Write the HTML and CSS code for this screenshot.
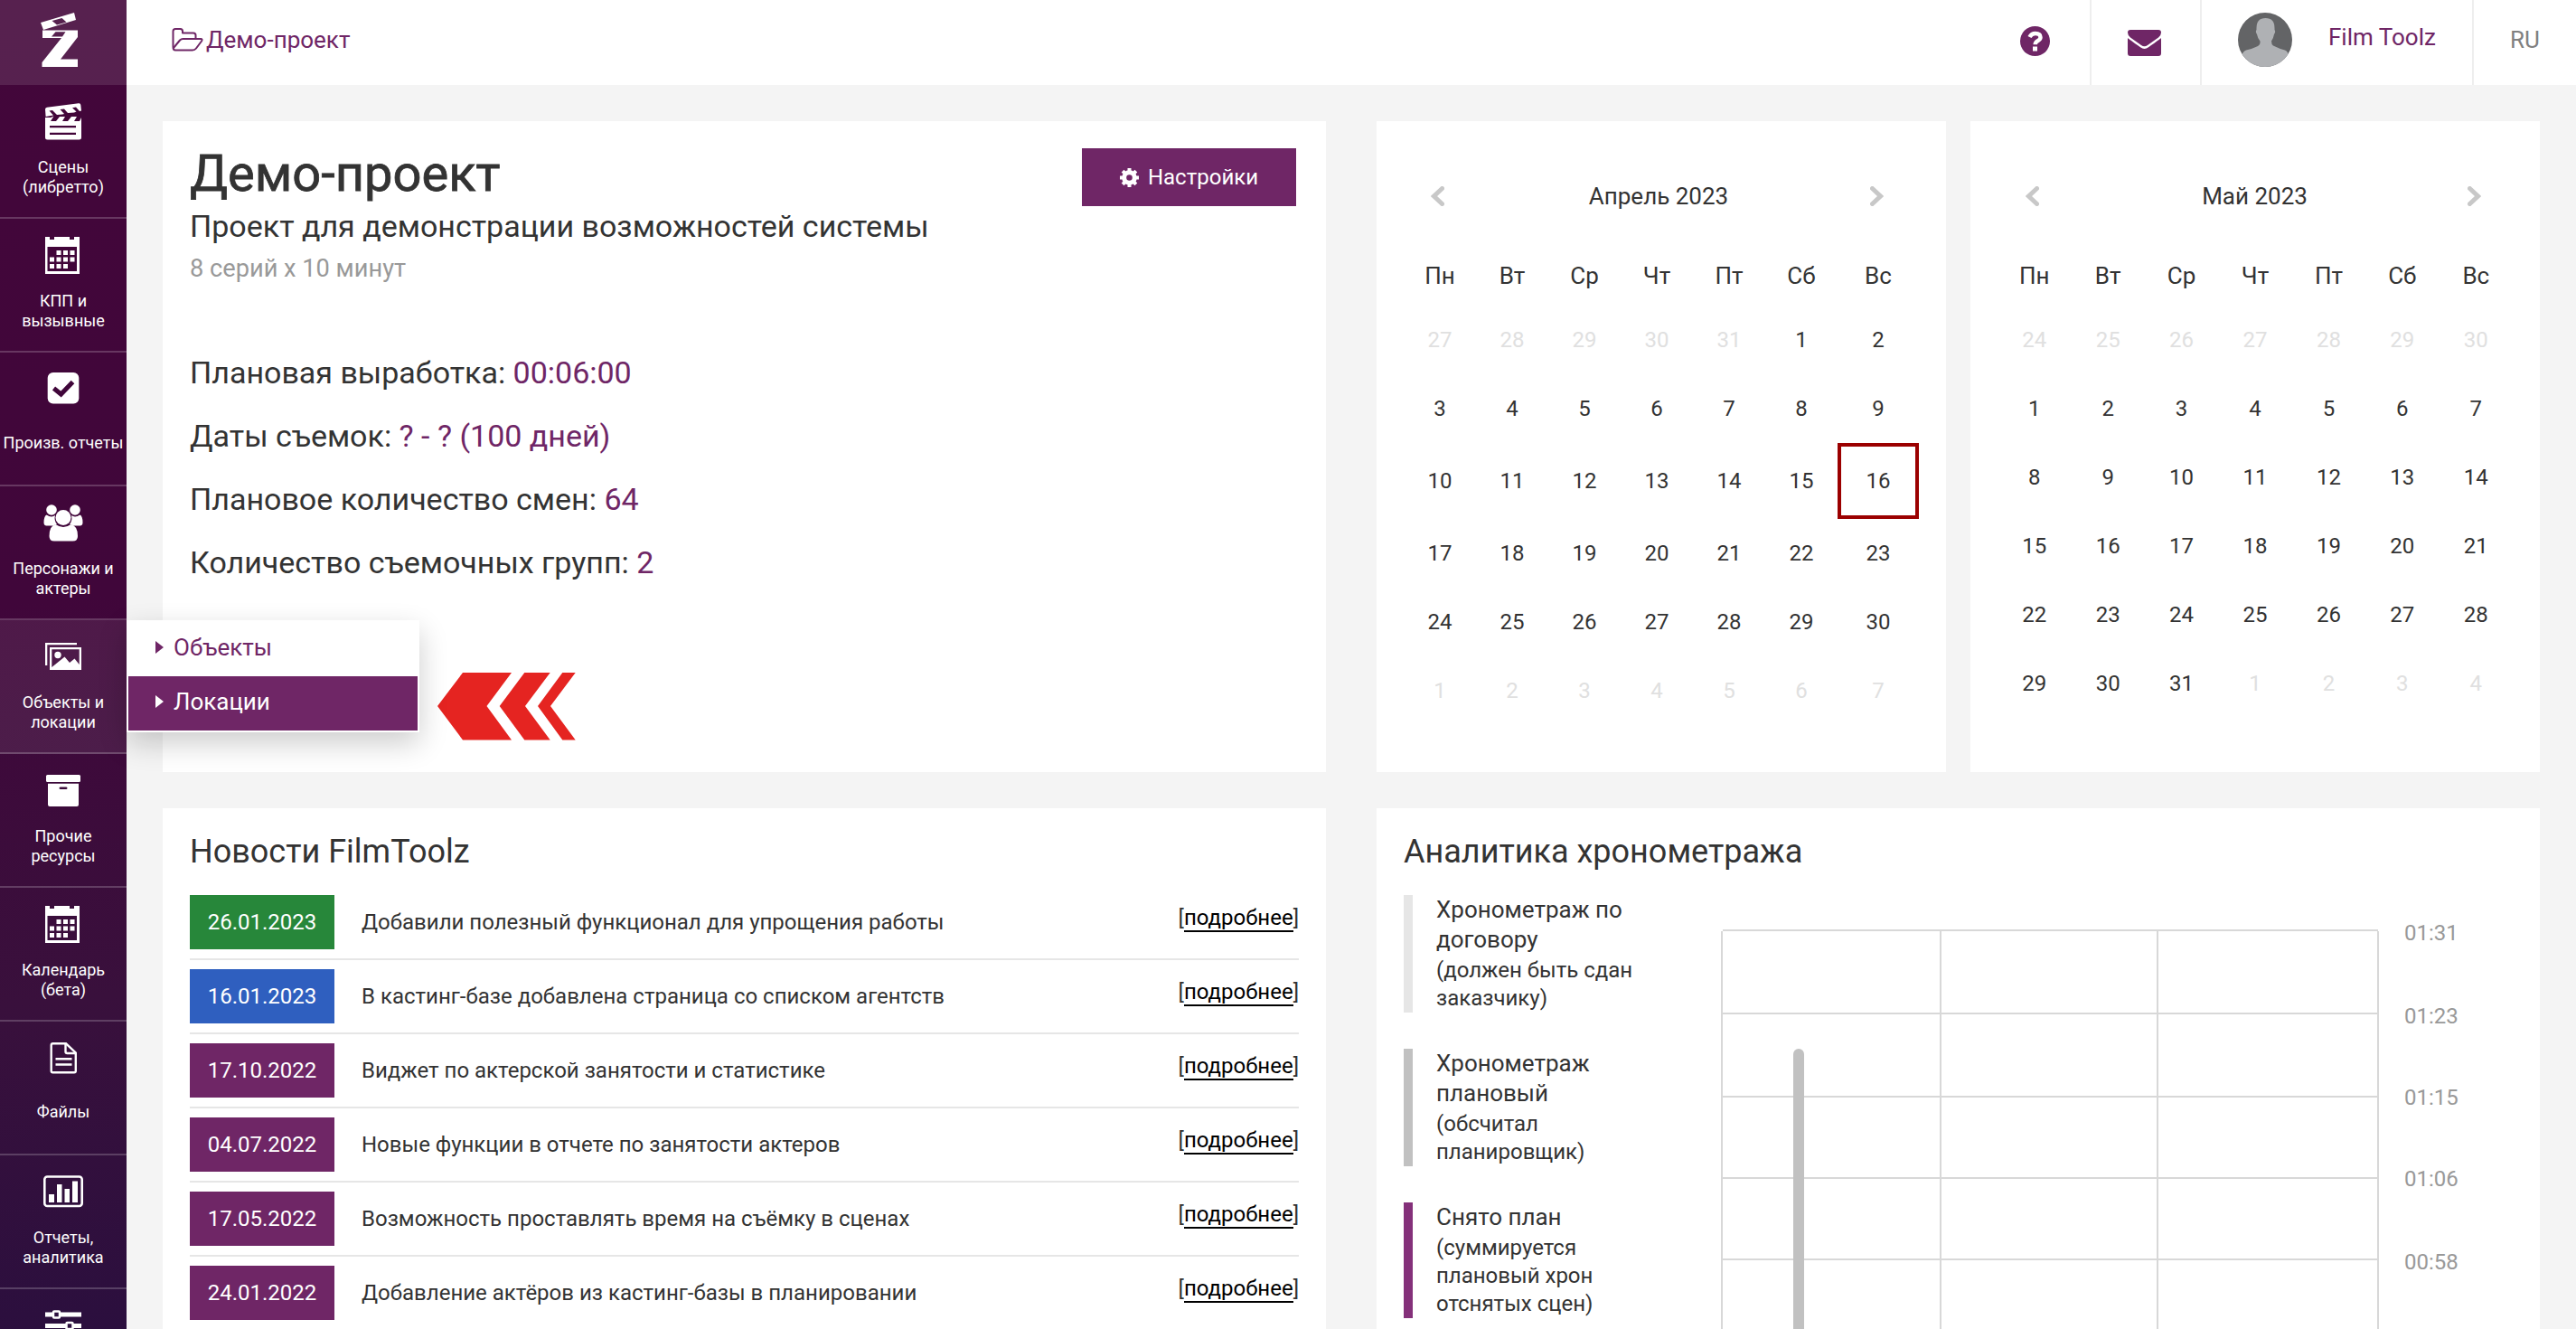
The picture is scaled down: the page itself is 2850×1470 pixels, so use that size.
FILE: index.html
```html
<!DOCTYPE html>
<html lang="ru">
<head>
  <meta charset="UTF-8">
  <meta name="viewport" content="width=device-width, initial-scale=1.0">
  <title>Демо-проект</title>
  <link rel="stylesheet" href="styles.css">
</head>
<body>

<!-- Боковое меню -->
<aside class="sidebar">
  <a href="#" class="logo">
    <svg width="41" height="60" viewBox="0 0 41 60" fill="#fff">
      <path fill-rule="evenodd" d="M0 11 37 0 39 8 3 19ZM12.500 9 18 13.500 28.500 10.500 23.500 6Z"/>
      <path fill-rule="evenodd" d="M2 19.500H41V27L22 51.500H41V60H1.500V55L23 28H2ZM16.500 21.200 12 26.500H24L27.500 21.200Z"/>
    </svg>
  </a>
  <nav>
    <a href="#" class="item">
      <svg class="icon" viewBox="0 0 44 41" fill="#fff">
        <path d="M2 7Q2 5 4 4.700L39 .300Q41 0 41.300 2L42 8.500 40 9 36 4.500 32 5.200 36.500 9.500 34 10.500 27 11 23 6.500 18.500 7 23 12 21 12.500 15 13 10 8 6.500 8.600 11 13.500 2.600 15Z"/>
        <path fill-rule="evenodd" d="M2 16H8L11.500 14.500 8 20H14L18 15H24L21 20H27L31 15H37L34 20H40L42 16V38Q42 40.500 39.500 40.500H4.500Q2 40.500 2 38ZM7 25V27.300H36V25ZM7 32.700V35H36V32.700Z"/>
      </svg>
      <span class="label">Сцены<br>(либретто)</span>
    </a>
    <a href="#" class="item">
      <svg class="icon" viewBox="0 0 44 41" fill="#fff">
        <path fill-rule="evenodd" d="M2 0H7V3H12V0H29V3H34V0H40V41H2ZM4.500 11V38H37V11Z"/>
        <path d="M14.500 15h5v5h-5zM22 15h5v5h-5zM29.500 15h5v5h-5zM7 22.500h5v5H7zM14.500 22.500h5v5h-5zM22 22.500h5v5h-5zM29.500 22.500h5v5h-5zM7 30h5v5H7zM14.500 30h5v5h-5zM22 30h5v5h-5z"/>
      </svg>
      <span class="label">КПП и<br>вызывные</span>
    </a>
    <a href="#" class="item">
      <svg class="icon" viewBox="0 0 44 41">
        <rect x="4.700" y="2" width="34.600" height="34.600" rx="6" fill="#fff"/>
        <path d="M11.500 19.500 19.500 26 32.500 12.500" fill="none" stroke="#40063a" stroke-width="5"/>
      </svg>
      <span class="label label-single">Произв. отчеты</span>
    </a>
    <a href="#" class="item">
      <svg class="icon" viewBox="0 0 44 41" fill="#fff">
        <circle cx="9" cy="6" r="5.800"/>
        <circle cx="35" cy="6" r="5.800"/>
        <path d="M3.500 11.500Q9 15 13 12 11.500 18 15 21.500 12 23 11 23.500H3Q.500 23 .500 20 .500 13 3.500 11.500ZM40.500 11.500Q35 15 31 12 32.500 18 29 21.500 32 23 33 23.500H41Q43.500 23 43.500 20 43.500 13 40.500 11.500Z"/>
        <circle cx="22" cy="14.500" r="8.500"/>
        <path d="M13.500 22Q22 28 30.500 22 38 23.500 38 35 38 40.500 32.500 40.500H12Q6.500 40.500 6.500 35 6.500 23.500 13.500 22Z"/>
      </svg>
      <span class="label">Персонажи и<br>актеры</span>
    </a>
    <div class="item active">
      <svg class="icon" viewBox="0 0 44 41" fill="#fff">
        <path d="M2 5H37V7.300H4.300V30H2Z"/>
        <path fill-rule="evenodd" d="M7 10H42V35H7ZM9.300 12.300V32L23.500 20.500 29 27 34.500 22.500 39.700 29V12.300Z"/>
        <circle cx="16" cy="18.500" r="3.700"/>
      </svg>
      <span class="label">Объекты и<br>локации</span>
      <div class="submenu">
        <a href="#"><i></i>Объекты</a>
        <a href="#" class="current"><i></i>Локации</a>
      </div>
    </div>
    <a href="#" class="item">
      <svg class="icon" viewBox="0 0 44 41" fill="#fff">
        <rect x="3" y="3" width="38" height="8" rx="1.500"/>
        <path fill-rule="evenodd" d="M5 12.700H39V36Q39 38 37 38H7Q5 38 5 36ZM19 16.500Q17.500 16.500 17.500 17.800 17.500 19 19 19H25Q26.500 19 26.500 17.800 26.500 16.500 25 16.500Z"/>
      </svg>
      <span class="label">Прочие<br>ресурсы</span>
    </a>
    <a href="#" class="item">
      <svg class="icon" viewBox="0 0 44 41" fill="#fff">
        <path fill-rule="evenodd" d="M2 0H7V3H12V0H29V3H34V0H40V41H2ZM4.500 11V38H37V11Z"/>
        <path d="M14.500 15h5v5h-5zM22 15h5v5h-5zM29.500 15h5v5h-5zM7 22.500h5v5H7zM14.500 22.500h5v5h-5zM22 22.500h5v5h-5zM29.500 22.500h5v5h-5zM7 30h5v5H7zM14.500 30h5v5h-5zM22 30h5v5h-5z"/>
      </svg>
      <span class="label">Календарь<br>(бета)</span>
    </a>
    <a href="#" class="item">
      <svg class="icon" viewBox="0 0 44 41" fill="none" stroke="#fff" stroke-width="2.400">
        <path d="M10.500 4.300H25L35.800 14.500V34.500Q35.800 36.300 34 36.300H10.500Q8.700 36.300 8.700 34.500V6Q8.700 4.300 10.500 4.300Z"/>
        <path d="M24.500 4.300V13Q24.500 15 26.500 15H35.500M13.500 21.300H31.500M13.500 27.500H31.500"/>
      </svg>
      <span class="label label-single">Файлы</span>
    </a>
    <a href="#" class="item">
      <svg class="icon" viewBox="0 0 44 41">
        <rect x="1.300" y="3.500" width="41.400" height="32.500" rx="3" fill="none" stroke="#fff" stroke-width="2.600"/>
        <path d="M6 23h6v9H6zM15 12h5.500v20H15zM23.500 17h5.500v15h-5.500zM32 8.500h6V32h-6z" fill="#fff"/>
      </svg>
      <span class="label">Отчеты,<br>аналитика</span>
    </a>
    <a href="#" class="item item-last">
      <svg width="44" height="24" viewBox="0 0 44 24">
        <path d="M2 8H42M2 20.500H42" stroke="#fff" stroke-width="5"/>
        <g fill="#2c0f3e" stroke="#fff" stroke-width="2.500">
          <rect x="11" y="4.500" width="7" height="7" rx="1"/>
          <rect x="25.500" y="17" width="7" height="7" rx="1"/>
        </g>
      </svg>
    </a>
  </nav>
</aside>

<div class="content">
  <!-- Шапка -->
  <header class="header">
    <a href="#" class="project-link">
      <svg width="35" height="26" viewBox="0 0 35 26" fill="none" stroke="#6f2666" stroke-width="2" stroke-linejoin="round">
        <path d="M1.500 21V3.500Q1.500 1 4 1H9.500Q12 1 12 3.500V5.500H24Q26.500 5.500 26.500 8V12"/>
        <path d="M2 22 9 13.500Q10.500 12 12.500 12H32Q34.500 12 33 14.500L27 22.500Q25.500 24.500 23 24.500H4Q1.500 24.500 1.500 21"/>
      </svg>
      Демо-проект
    </a>
    <div class="header-right">
      <a href="#" class="cell help">
        <svg width="33" height="33" viewBox="0 0 33 33">
          <circle cx="16.500" cy="16.500" r="16.500" fill="#6f2666"/>
          <path d="M10.500 12Q12.500 8 16.800 8 22.500 8 22.500 12.300 22.500 14.500 19.500 16.200 16.700 18 16.700 20.200" fill="none" stroke="#fff" stroke-width="4.500"/>
          <rect x="14" y="22.500" width="5" height="5" fill="#fff"/>
        </svg>
      </a>
      <a href="#" class="cell mail">
        <svg width="37" height="29" viewBox="0 0 37 29" fill="#6f2666">
          <path d="M3 0H34Q37 0 37 3 37 6 34 8.500L22 17Q18.500 19.500 15 17L3 8.500Q0 6 0 3 0 0 3 0Z"/>
          <path d="M0 9Q1 10 14 19.300 18.500 22.500 23 19.300 36 10 37 9V26Q37 29 34 29H3Q0 29 0 26Z"/>
        </svg>
      </a>
      <a href="#" class="cell user">
        <svg width="60" height="60" viewBox="0 0 60 60">
          <defs><clipPath id="round"><circle cx="30" cy="30" r="30"/></clipPath></defs>
          <g clip-path="url(#round)">
            <rect width="60" height="60" fill="#636466"/>
            <path d="M30.500 6Q40.500 6 40.500 17V19Q42 21 40 24 39 29 37 31.500 37 35 39 36.500 46 40 52 41.500 56 43 56.500 50V60H4V48Q5 43 9 41.500 16 40 22 37 25 35 24.500 31.500 22 29 21 24 19 21 20.500 19V17Q20.500 6 30.500 6Z" fill="#afb1b4"/>
          </g>
        </svg>
        <span>Film Toolz</span>
      </a>
      <a href="#" class="cell lang">RU</a>
    </div>
  </header>

  <main class="main">
    <!-- О проекте -->
    <section class="card project">
      <div class="project-info">
        <h1>Демо-проект</h1>
        <p class="subtitle">Проект для демонстрации возможностей системы</p>
        <p class="series">8 серий x 10 минут</p>
        <ul class="facts">
          <li>Плановая выработка: <b>00:06:00</b></li>
          <li>Даты съемок: <b>? - ? (100 дней)</b></li>
          <li>Плановое количество смен: <b>64</b></li>
          <li>Количество съемочных групп: <b>2</b></li>
        </ul>
      </div>
      <a href="#" class="settings">
        <svg width="21" height="21" viewBox="0 0 21 21">
          <circle cx="10.500" cy="10.500" r="5.800" fill="none" stroke="#fff" stroke-width="5"/>
          <path d="M10.500 0V4M10.500 17V21M0 10.500H4M17 10.500H21M3.100 3.100 6 6M15 15 17.900 17.900M3.100 17.900 6 15M15 6 17.900 3.100" stroke="#fff" stroke-width="4"/>
        </svg>
        Настройки
      </a>
    </section>

    <!-- Календари -->
    <div class="calendars">
      <section class="card calendar">
        <div class="month">
          <svg width="15" height="22" viewBox="0 0 15 22"><path d="M12.500 2.500 3.500 11 12.500 19.500"/></svg>
          <span>Апрель 2023</span>
          <svg width="15" height="22" viewBox="0 0 15 22"><path d="M2.500 2.500 11.500 11 2.500 19.500"/></svg>
        </div>
        <div class="days days-april">
          <em>Пн</em><em>Вт</em><em>Ср</em><em>Чт</em><em>Пт</em><em>Сб</em><em>Вс</em>
          <s>27</s><s>28</s><s>29</s><s>30</s><s>31</s><span>1</span><span>2</span>
          <span>3</span><span>4</span><span>5</span><span>6</span><span>7</span><span>8</span><span>9</span>
          <span>10</span><span>11</span><span>12</span><span>13</span><span>14</span><span>15</span><span class="today">16</span>
          <span>17</span><span>18</span><span>19</span><span>20</span><span>21</span><span>22</span><span>23</span>
          <span>24</span><span>25</span><span>26</span><span>27</span><span>28</span><span>29</span><span>30</span>
          <s>1</s><s>2</s><s>3</s><s>4</s><s>5</s><s>6</s><s>7</s>
        </div>
      </section>
      <section class="card calendar">
        <div class="month month-may">
          <svg width="15" height="22" viewBox="0 0 15 22"><path d="M12.500 2.500 3.500 11 12.500 19.500"/></svg>
          <span>Май 2023</span>
          <svg width="15" height="22" viewBox="0 0 15 22"><path d="M2.500 2.500 11.500 11 2.500 19.500"/></svg>
        </div>
        <div class="days">
          <em>Пн</em><em>Вт</em><em>Ср</em><em>Чт</em><em>Пт</em><em>Сб</em><em>Вс</em>
          <s>24</s><s>25</s><s>26</s><s>27</s><s>28</s><s>29</s><s>30</s>
          <span>1</span><span>2</span><span>3</span><span>4</span><span>5</span><span>6</span><span>7</span>
          <span>8</span><span>9</span><span>10</span><span>11</span><span>12</span><span>13</span><span>14</span>
          <span>15</span><span>16</span><span>17</span><span>18</span><span>19</span><span>20</span><span>21</span>
          <span>22</span><span>23</span><span>24</span><span>25</span><span>26</span><span>27</span><span>28</span>
          <span>29</span><span>30</span><span>31</span><s>1</s><s>2</s><s>3</s><s>4</s>
        </div>
      </section>
    </div>

    <!-- Новости -->
    <section class="card news">
      <h2>Новости FilmToolz</h2>
      <div class="news-row">
        <span class="date green">26.01.2023</span>
        <span class="text">Добавили полезный функционал для упрощения работы</span>
        <span class="more">[<a href="#">подробнее</a>]</span>
      </div>
      <div class="news-row">
        <span class="date blue">16.01.2023</span>
        <span class="text">В кастинг-базе добавлена страница со списком агентств</span>
        <span class="more">[<a href="#">подробнее</a>]</span>
      </div>
      <div class="news-row">
        <span class="date">17.10.2022</span>
        <span class="text">Виджет по актерской занятости и статистике</span>
        <span class="more">[<a href="#">подробнее</a>]</span>
      </div>
      <div class="news-row">
        <span class="date">04.07.2022</span>
        <span class="text">Новые функции в отчете по занятости актеров</span>
        <span class="more">[<a href="#">подробнее</a>]</span>
      </div>
      <div class="news-row">
        <span class="date">17.05.2022</span>
        <span class="text">Возможность проставлять время на съёмку в сценах</span>
        <span class="more">[<a href="#">подробнее</a>]</span>
      </div>
      <div class="news-row">
        <span class="date">24.01.2022</span>
        <span class="text">Добавление актёров из кастинг-базы в планировании</span>
        <span class="more">[<a href="#">подробнее</a>]</span>
      </div>
    </section>

    <!-- Аналитика -->
    <section class="card analytics">
      <h2>Аналитика хронометража</h2>
      <div class="analytics-body">
        <div class="legend">
          <div class="legend-item contract">Хронометраж по<br>договору<small>(должен быть сдан<br>заказчику)</small></div>
          <div class="legend-item plan">Хронометраж<br>плановый<small>(обсчитал<br>планировщик)</small></div>
          <div class="legend-item shot">Снято план<small>(суммируется<br>плановый хрон<br>отснятых сцен)</small></div>
        </div>
        <svg class="chart" width="830" height="480" viewBox="0 0 830 480">
          <g stroke="#d8d8d8" stroke-width="2">
            <path d="M2 39H727M2 131H727M2 223H727M2 313H727M2 403H727"/>
            <path d="M1 40V480M243 40V480M483 40V480M727 40V480"/>
          </g>
          <path d="M86 480V176" stroke="#c1c1c1" stroke-width="12"/>
          <circle cx="86" cy="176" r="6" fill="#c1c1c1"/>
          <g class="axis">
            <text x="756" y="49.500">01:31</text>
            <text x="756" y="142">01:23</text>
            <text x="756" y="232">01:15</text>
            <text x="756" y="322">01:06</text>
            <text x="756" y="414">00:58</text>
          </g>
        </svg>
      </div>
    </section>
  </main>
</div>

<!-- Указатель на пункт подменю -->
<svg class="pointer" width="153" height="75" viewBox="0 0 153 75" fill="#e52421">
  <path d="M0 37 28 0H82L54.500 37 82 74.500H28Z"/>
  <path d="M68.700 37 96.300 0H124.700L97 37 124.700 74.500H96.300Z"/>
  <path d="M111 37 138.300 0H152.700L125 37 152.700 74.500H138.300Z"/>
</svg>

</body>
</html>
```
FILE: styles.css
```css
:root {
  --purple: #6f2666;
  --text: #333;
  --bg: #f4f4f4;
  --line: #e6e6e6;
}

* {
  box-sizing: border-box;
}

body {
  margin: 0;
  display: flex;
  height: 1470px;
  background: var(--bg);
  color: var(--text);
  font-family: Roboto, "Liberation Sans", sans-serif;
  font-size: 24px;
}

a {
  color: inherit;
  text-decoration: none;
}

h1, h2, p, ul {
  margin: 0;
  padding: 0;
  list-style: none;
  font-weight: 400;
}

/* боковое меню */
.sidebar {
  flex: none;
  width: 140px;
  background: linear-gradient(175deg, #43063a 0%, #40063a 45%, #39103c 75%, #2b0f3e 100%);
  color: #fff;
}

.logo {
  display: block;
  height: 94px;
  padding: 14px 0 0 45px;
  background: rgba(255, 255, 255, 0.11);
}

.item {
  position: relative;
  display: flex;
  flex-direction: column;
  align-items: center;
  height: 148px;
  padding-top: 20px;
  border-bottom: 2px solid rgba(255, 255, 255, 0.2);
}

.item.active {
  background: rgba(255, 255, 255, 0.08);
}

.item-last {
  height: 44px;
  border: none;
}

.icon {
  width: 44px;
  height: 41px;
}

.label {
  margin-top: 19px;
  font-size: 18px;
  line-height: 22px;
  text-align: center;
  white-space: nowrap;
}

.label-single {
  padding-top: 9px;
}

.submenu {
  position: absolute;
  left: 140px;
  top: 0;
  z-index: 10;
  width: 324px;
  height: 124px;
  padding: 2px;
  background: #fff;
  box-shadow: 0 12px 30px rgba(0, 0, 0, 0.2);
  color: var(--purple);
}

.submenu a {
  display: flex;
  align-items: center;
  height: 60px;
  padding: 0 0 4px 30px;
  font-size: 26px;
}

.submenu .current {
  background: var(--purple);
  color: #fff;
}

.submenu i {
  margin-right: 11px;
  border-left: 9px solid;
  border-top: 7.5px solid transparent;
  border-bottom: 7.5px solid transparent;
}

.content {
  flex: 1;
}

/* шапка */
.header {
  display: flex;
  justify-content: space-between;
  height: 94px;
  background: #fff;
}

.project-link {
  display: flex;
  align-items: center;
  gap: 3px;
  padding: 0 0 6px 50px;
  font-size: 26px;
  color: var(--purple);
}

.header-right {
  display: flex;
}

.cell {
  display: flex;
  align-items: center;
  border-left: 2px solid #eee;
}

.cell.help {
  width: 77px;
  padding-bottom: 3px;
  border: none;
}

.cell.mail {
  width: 122px;
  padding-left: 40px;
}

.cell.user {
  width: 301px;
  padding: 0 0 6px 40px;
  gap: 40px;
  font-size: 26px;
  color: var(--purple);
}

.cell.user span {
  padding-bottom: 6px;
}

.cell.lang {
  width: 115px;
  padding: 0 0 6px 40px;
  font-size: 26px;
  color: #808080;
}

/* карточки */
.main {
  display: grid;
  grid-template-columns: 1287px 1287px;
  grid-template-rows: 720px 576px;
  gap: 40px 56px;
  padding: 40px 40px 0;
}

.card {
  background: #fff;
}

.card h2 {
  font-size: 36px;
  line-height: 46px;
}

.project {
  display: flex;
  justify-content: space-between;
  align-items: flex-start;
  padding: 28px 33px 0 30px;
}

.project h1 {
  font-size: 56px;
  line-height: 60px;
  -webkit-text-stroke: 0.8px var(--text);
}

.subtitle {
  margin-top: 6px;
  font-size: 34px;
  line-height: 44px;
}

.series {
  margin-top: 7px;
  font-size: 27.2px;
  line-height: 36px;
  color: #999;
}

.facts {
  margin-top: 62px;
  font-size: 34px;
  line-height: 70px;
}

.facts b {
  font-weight: 400;
  color: var(--purple);
}

.settings {
  display: flex;
  align-items: center;
  justify-content: center;
  gap: 10px;
  width: 237px;
  height: 64px;
  margin-top: 2px;
  background: var(--purple);
  color: #fff;
}

/* календари */
.calendars {
  display: grid;
  grid-template-columns: 630px 630px;
  gap: 27px;
}

.calendar {
  padding: 60px 30px 0;
}

.month {
  display: flex;
  align-items: center;
  justify-content: space-between;
  height: 46px;
  padding: 0 39px 0 30px;
  font-size: 26px;
}

.month-may {
  padding: 0 35px 0 31px;
}

.month span {
  padding-left: 3px;
}

.month svg {
  fill: none;
  stroke: #c8c8c8;
  stroke-width: 5;
  stroke-linecap: round;
}

.days {
  display: grid;
  grid-template-columns: repeat(7, 1fr);
  grid-template-rows: 66px repeat(6, 76px);
  margin-top: 32px;
}

.days-april {
  grid-template-columns: repeat(6, 80px) 90px;
  grid-template-rows: 66px 76px 76px 84px 76px 76px 76px;
}

.days > * {
  display: flex;
  align-items: center;
  justify-content: center;
  font-style: normal;
  text-decoration: none;
}

.days em {
  font-size: 26px;
}

.days s {
  color: #e0e0e0;
}

.today {
  border: 4px solid #9b0000;
}

/* новости */
.news {
  padding: 25px 30px 0;
}

.news h2 {
  margin-bottom: 25px;
}

.news-row {
  display: flex;
  align-items: center;
  height: 72px;
  padding-bottom: 10px;
  margin-bottom: 10px;
  border-bottom: 2px solid var(--line);
}

.news-row:last-child {
  height: 60px;
  padding: 0;
  margin: 0;
  border: none;
}

.date {
  width: 160px;
  line-height: 60px;
  margin-right: 30px;
  text-align: center;
  background: var(--purple);
  color: #fff;
}

.date.green {
  background: #27873a;
}

.date.blue {
  background: #2f5fbf;
}

.more {
  margin-left: auto;
  padding-bottom: 11px;
}

.more a {
  color: #000;
  border-bottom: 2px solid #000;
}

/* аналитика */
.analytics {
  padding: 25px 30px 0;
}

.analytics-body {
  display: flex;
  margin-top: 25px;
}

.legend {
  width: 351px;
}

.legend-item {
  padding-left: 26px;
  margin-bottom: 40px;
  border-left: 10px solid var(--line);
  font-size: 26px;
  line-height: 33px;
}

.legend-item:last-child {
  margin-bottom: 0;
}

.legend-item small {
  display: block;
  padding-top: 2px;
  font-size: 24px;
  line-height: 31px;
}

.legend-item.plan {
  border-color: #c1c1c1;
}

.legend-item.shot {
  border-color: #84307a;
}

.axis text {
  fill: #999;
  font-size: 24px;
}

/* стрелка-подсказка */
.pointer {
  position: absolute;
  left: 484px;
  top: 744px;
}
```
